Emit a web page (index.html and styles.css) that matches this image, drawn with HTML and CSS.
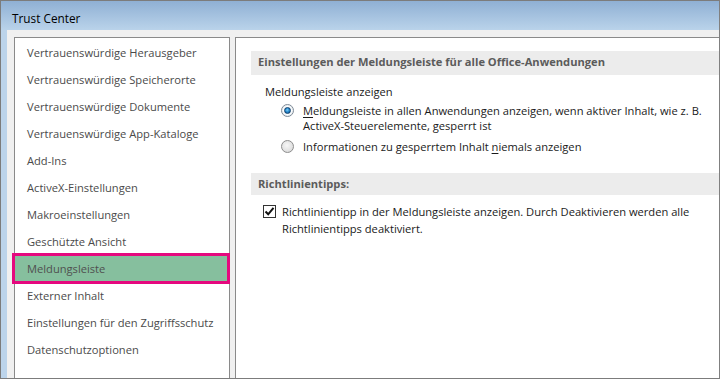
FILE: index.html
```html
<!DOCTYPE html>
<html lang="de">
<head>
<meta charset="utf-8">
<title>Trust Center</title>
<link rel="stylesheet" href="styles.css">
</head>
<body>
<div class="window">
  <div class="titlebar">Trust Center</div>
  <div class="body">
    <ul class="nav">
      <li class="nav-item">Vertrauenswürdige Herausgeber</li>
      <li class="nav-item">Vertrauenswürdige Speicherorte</li>
      <li class="nav-item">Vertrauenswürdige Dokumente</li>
      <li class="nav-item">Vertrauenswürdige App-Kataloge</li>
      <li class="nav-item">Add-Ins</li>
      <li class="nav-item">ActiveX-Einstellungen</li>
      <li class="nav-item">Makroeinstellungen</li>
      <li class="nav-item">Geschützte Ansicht</li>
      <li class="nav-item selected">Meldungsleiste</li>
      <li class="nav-item">Externer Inhalt</li>
      <li class="nav-item">Einstellungen für den Zugriffsschutz</li>
      <li class="nav-item">Datenschutzoptionen</li>
    </ul>
    <div class="main">
      <div class="section-head first">Einstellungen der Meldungsleiste für alle Office-Anwendungen</div>
      <div class="group-label">Meldungsleiste anzeigen</div>
      <div class="option radio-opt">
        <span class="radio checked"><span class="dot"></span></span>
        <span class="opt-text"><u>M</u>eldungsleiste in allen Anwendungen anzeigen, wenn aktiver Inhalt, wie z. B.<br>ActiveX-Steuerelemente, gesperrt ist</span>
      </div>
      <div class="option radio-opt second">
        <span class="radio"></span>
        <span class="opt-text">Informationen zu gesperrtem Inhalt <u>n</u>iemals anzeigen</span>
      </div>
      <div class="section-head second-head">Richtlinientipps:</div>
      <div class="option check-opt">
        <span class="checkbox"><svg width="11" height="11" viewBox="0 0 11 11"><path d="M1.5 5.5 L4.2 8.3 L9.5 1.8" fill="none" stroke="#111" stroke-width="2"/></svg></span>
        <span class="opt-text check-text">Richtlinientipp in der Meldungsleiste anzeigen. Durch Deaktivieren werden alle<br>Richtlinientipps deaktiviert.</span>
      </div>
    </div>
  </div>
</div>
</body>
</html>
```

FILE: styles.css
```css
* { box-sizing: border-box; }
html, body { margin: 0; padding: 0; background: #fff; }
body {
  font-family: "Open Sans", "Noto Sans", sans-serif;
  font-size: 11.15px;
}
.window {
  width: 720px;
  height: 379px;
  border: 1px solid #7c7c7c;
  border-right-color: #808080;
  display: flex;
  flex-direction: column;
  overflow: hidden;
}
.titlebar {
  height: 29px;
  flex: none;
  background: linear-gradient(#8fb0d4, #bad3ea);
  color: #000;
  font-size: 11.8px;
  padding: 9px 0 0 11px;
  line-height: 16px;
}
.body {
  flex: 1;
  display: flex;
  gap: 5px;
  background: #f0f0f0;
  border-left: 6px solid #bcd4eb;
  padding: 7px 0 0 7px;
  min-height: 0;
}
.nav {
  list-style: none;
  margin: 0;
  padding: 1px 0 0 0;
  width: 216px;
  flex: none;
  background: #fff;
  border: 1px solid #8a8a8a;
  border-bottom: none;
}
.nav-item {
  height: 27px;
  line-height: 27px;
  padding-left: 12px;
  color: #4a4a4a;
  white-space: nowrap;
}
.nav-item.selected {
  height: 31px;
  line-height: 25px;
  margin: -2px -1px -2px -3px;
  padding-left: 12px;
  background: #86bf9e;
  border: 3px solid #e5087e;
  color: #505050;
}
.main {
  flex: 1;
  background: #fff;
  border: 1px solid #8a8a8a;
  border-bottom: none;
  border-right: none;
  padding: 13px 0 0 15px;
  color: #1a1a1a;
}
.section-head {
  background: #ececec;
  color: #5b5b5b;
  font-weight: 700;
  padding-left: 7px;
  white-space: nowrap;
}
.section-head.first {
  height: 24px;
  line-height: 22px;
}
.section-head.second-head {
  height: 22px;
  line-height: 21px;
  margin-top: 19px;
}
.group-label {
  margin: 9px 0 0 14px;
  line-height: 16px;
}
.option {
  display: flex;
  align-items: flex-start;
  white-space: nowrap;
}
.radio-opt {
  margin: 3px 0 0 30px;
  line-height: 15px;
  gap: 9px;
}
.radio-opt.second { margin-top: 6px; }
.radio {
  width: 13px;
  height: 13px;
  border-radius: 50%;
  border: 1px solid #8d8d8d;
  background: radial-gradient(circle at 45% 40%, #f7f7f7 0%, #e2e2e2 60%, #cfcfcf 100%);
  margin-top: 1px;
  flex: none;
  display: flex;
  align-items: center;
  justify-content: center;
}
.radio.checked {
  background: #fff;
  border-color: #7e8a96;
  box-shadow: inset 0 0 0 1px #e9eef2;
}
.radio .dot {
  width: 7px;
  height: 7px;
  border-radius: 50%;
  background: radial-gradient(circle at 45% 40%, #7fd0f7 0%, #2a8ccf 45%, #0f4e86 100%);
  border: 1px solid #0d3f6d;
}
.check-opt {
  margin: 8px 0 0 12px;
  line-height: 17px;
  gap: 6px;
}
.checkbox {
  width: 13px;
  height: 13px;
  border: 1px solid #333;
  background: #fff;
  flex: none;
  margin-top: 2px;
  display: flex;
  align-items: center;
  justify-content: center;
}
.checkbox svg { display: block; }
u { text-underline-offset: 2px; }
```
